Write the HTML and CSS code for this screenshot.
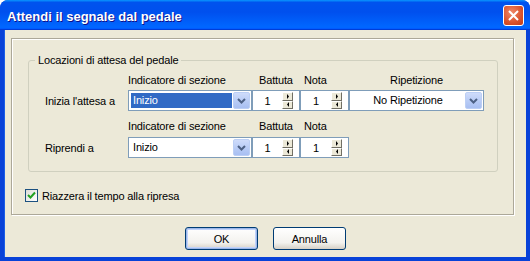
FILE: index.html
```html
<!DOCTYPE html>
<html>
<head lang="it">
    <meta charset="UTF-8">
    <title>Attendi il segnale dal pedale</title>
    <link rel="stylesheet" href="styles.css">
</head>
<body>
    <div class="window">
        <div class="titlebar">
            <span class="title">Attendi il segnale dal pedale</span>
            <div class="close">
                <svg width="13" height="13" viewBox="0 0 13 13"><path d="M2 2 L11 11 M11 2 L2 11" stroke="#fff" stroke-width="2" fill="none"/></svg>
            </div>
        </div>
        <div class="client">
            <div class="panel">
                <fieldset class="group">
                    <legend>Locazioni di attesa del pedale</legend>
                    <div class="grid">
                        <div class="hdr"></div>
                        <div class="hdr">Indicatore di sezione</div>
                        <div class="hdr hdr-bat">Battuta</div>
                        <div class="hdr hdr-nota">Nota</div>
                        <div class="hdr hdr-rip">Ripetizione</div>

                        <div class="rowlabel">Inizia l'attesa a</div>
                        <div class="combo">
                            <div class="combo-text"><span class="sel">Inizio</span></div>
                            <div class="combo-btn"><svg width="9" height="6" viewBox="0 0 9 6"><path d="M1 1 L4.5 4.5 L8 1" stroke="#4d6185" stroke-width="2" fill="none"/></svg></div>
                        </div>
                        <div class="spin">
                            <span class="spin-val">1</span>
                            <div class="spin-btns">
                                <div class="sbtn"><svg width="4" height="5" viewBox="0 0 4 5"><path d="M1 0 L3 2.5 L1 5 Z" fill="#000"/></svg></div>
                                <div class="sbtn"><svg width="4" height="5" viewBox="0 0 4 5"><path d="M3 0 L1 2.5 L3 5 Z" fill="#000"/></svg></div>
                            </div>
                        </div>
                        <div class="spin">
                            <span class="spin-val">1</span>
                            <div class="spin-btns">
                                <div class="sbtn"><svg width="4" height="5" viewBox="0 0 4 5"><path d="M1 0 L3 2.5 L1 5 Z" fill="#000"/></svg></div>
                                <div class="sbtn"><svg width="4" height="5" viewBox="0 0 4 5"><path d="M3 0 L1 2.5 L3 5 Z" fill="#000"/></svg></div>
                            </div>
                        </div>
                        <div class="combo">
                            <div class="combo-text center">No Ripetizione</div>
                            <div class="combo-btn"><svg width="9" height="6" viewBox="0 0 9 6"><path d="M1 1 L4.5 4.5 L8 1" stroke="#4d6185" stroke-width="2" fill="none"/></svg></div>
                        </div>

                        <div class="hdr hdr2"></div>
                        <div class="hdr hdr2">Indicatore di sezione</div>
                        <div class="hdr hdr2 hdr-bat">Battuta</div>
                        <div class="hdr hdr2 hdr-nota">Nota</div>
                        <div class="hdr hdr2"></div>

                        <div class="rowlabel">Riprendi a</div>
                        <div class="combo">
                            <div class="combo-text"><span class="nosel">Inizio</span></div>
                            <div class="combo-btn"><svg width="9" height="6" viewBox="0 0 9 6"><path d="M1 1 L4.5 4.5 L8 1" stroke="#4d6185" stroke-width="2" fill="none"/></svg></div>
                        </div>
                        <div class="spin">
                            <span class="spin-val">1</span>
                            <div class="spin-btns">
                                <div class="sbtn"><svg width="4" height="5" viewBox="0 0 4 5"><path d="M1 0 L3 2.5 L1 5 Z" fill="#000"/></svg></div>
                                <div class="sbtn"><svg width="4" height="5" viewBox="0 0 4 5"><path d="M3 0 L1 2.5 L3 5 Z" fill="#000"/></svg></div>
                            </div>
                        </div>
                        <div class="spin">
                            <span class="spin-val">1</span>
                            <div class="spin-btns">
                                <div class="sbtn"><svg width="4" height="5" viewBox="0 0 4 5"><path d="M1 0 L3 2.5 L1 5 Z" fill="#000"/></svg></div>
                                <div class="sbtn"><svg width="4" height="5" viewBox="0 0 4 5"><path d="M3 0 L1 2.5 L3 5 Z" fill="#000"/></svg></div>
                            </div>
                        </div>
                        <div></div>
                    </div>
                </fieldset>
                <div class="check-row">
                    <div class="checkbox">
                        <svg width="9" height="9" viewBox="0 0 9 9"><path d="M1 4 L3.5 6.5 L8 1.5" stroke="#21a121" stroke-width="2" fill="none"/></svg>
                    </div>
                    <span>Riazzera il tempo alla ripresa</span>
                </div>
            </div>
            <div class="buttons">
                <div class="button default">OK</div>
                <div class="button">Annulla</div>
            </div>
        </div>
    </div>
</body>
</html>
```
FILE: styles.css
```css
*{
    margin: 0;
    padding: 0;
    box-sizing: border-box;
}
body{
    background: #ffffff;
    font-family: "Liberation Sans", Arial, sans-serif;
    font-size: 11px;
    letter-spacing: -0.15px;
    color: #000000;
}
.window{
    width: 530px;
    height: 261px;
    display: flex;
    flex-direction: column;
    background: #0842d8;
    border-radius: 8px 8px 0 0;
    overflow: hidden;
}
.titlebar{
    height: 30px;
    display: flex;
    align-items: center;
    padding: 0 6px 0 7px;
    background: linear-gradient(180deg, #0997ff, #0053ee 8%, #0050ee 40%, #0066ff 88%, #0066ff 93%, #005bff 95%, #003dd7 96%, #003dd7);
}
.title{
    color: #ffffff;
    font-weight: bold;
    font-size: 13px;
    letter-spacing: 0;
    text-shadow: 1px 1px 0 #0f1089;
    margin-top: 3px;
}
.close{
    margin-left: auto;
    width: 21px;
    height: 21px;
    margin-top: 1px;
    border: 1px solid #ffffff;
    border-radius: 3px;
    background: radial-gradient(circle at 40% 35%, #f08a6a, #d9522c 60%, #c23b18);
    display: flex;
    align-items: center;
    justify-content: center;
}
.client{
    flex: 1;
    margin: 0 4px 4px 4px;
    background: #ece9d8;
    display: flex;
    flex-direction: column;
    border-left: 1px solid #1a5ee8;
}
.panel{
    margin: 8px 12px 0 6px;
    height: 177px;
    border: 1px solid #aca899;
    box-shadow: 1px 1px 0 #ffffff, inset 1px 1px 0 #ffffff;
    padding: 14px 17px 0 16px;
}
.group{
    border: 1px solid #d0d0bf;
    border-radius: 3px;
    padding: 1px 13px 13px 16px;
    margin-top: 1px;
}
.group legend{
    margin-left: -10px;
    padding: 0 3px;
    line-height: 13px;
}
.grid{
    display: grid;
    grid-template-columns: 83px 124px 48px 49px 135px;
}
.hdr{
    height: 13px;
    line-height: 13px;
    margin: 6px 0 3px;
    white-space: nowrap;
}
.hdr2{
    margin: 9px 0 4px;
}
.hdr-bat{
    padding-left: 7px;
}
.hdr-nota{
    padding-left: 4px;
}
.hdr-rip{
    text-align: center;
}
.rowlabel{
    align-self: center;
}
.combo{
    height: 21px;
    border: 1px solid #7f9db9;
    background: #ffffff;
    display: flex;
    padding: 1px;
}
.combo-text{
    flex: 1;
    display: flex;
    align-items: center;
    line-height: 15px;
}
.combo-text.center{
    justify-content: center;
}
.sel{
    display: block;
    width: 100%;
    height: 15px;
    margin: 0 1px;
    padding-left: 2px;
    background: #316ac5;
    color: #ffffff;
}
.nosel{
    padding-left: 3px;
}
.combo-btn{
    width: 17px;
    border: 1px solid #bccff5;
    border-radius: 2px;
    background: linear-gradient(180deg, #cfdcfb, #b6caf5 60%, #a8bff2);
    display: flex;
    align-items: center;
    justify-content: center;
}
.spin{
    height: 21px;
    border: 1px solid #7f9db9;
    background: #ffffff;
    display: flex;
    align-items: center;
    padding: 1px 6px 1px 0;
}
.spin-val{
    flex: 1;
    text-align: center;
}
.spin-btns{
    width: 11px;
    height: 17px;
    display: flex;
    flex-direction: column;
}
.sbtn{
    flex: 1;
    background: #ece9d8;
    border: 1px solid;
    border-color: #ffffff #716f64 #716f64 #ffffff;
    display: flex;
    align-items: center;
    justify-content: center;
}
.check-row{
    display: flex;
    align-items: center;
    margin: 17px 0 0 -3px;
    gap: 4px;
}
.checkbox{
    width: 13px;
    height: 13px;
    border: 1px solid #1c5180;
    background: linear-gradient(135deg, #dcdcd7, #ffffff);
    display: flex;
    align-items: center;
    justify-content: center;
}
.buttons{
    display: flex;
    justify-content: center;
    gap: 15px;
    margin-top: 12px;
}
.button{
    width: 73px;
    height: 23px;
    border: 1px solid #003c74;
    border-radius: 3px;
    background: linear-gradient(180deg, #ffffff, #f3f2ee 70%, #d6d0c5);
    display: flex;
    align-items: center;
    justify-content: center;
}
.button.default{
    box-shadow: inset 0 0 0 1px #9cb7e8, inset 0 0 0 2px #c1d3fb;
}
```
